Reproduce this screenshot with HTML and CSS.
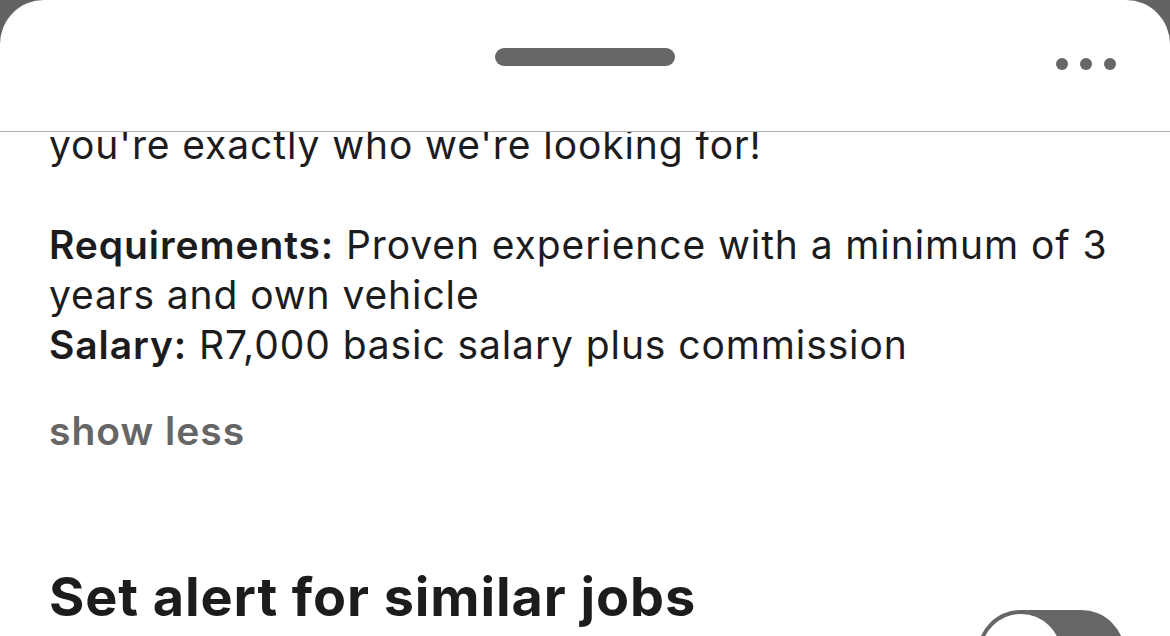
FILE: index.html
```html
<!DOCTYPE html>
<html>
<head>
<meta charset="utf-8">
<link rel="stylesheet" href="styles.css">
</head>
<body>
<div class="sheet">
  <header class="sheet-header">
    <div class="handle"></div>
    <div class="more">
      <span class="dot"></span><span class="dot"></span><span class="dot"></span>
    </div>
  </header>
  <main class="viewport">
    <div class="scroller">
      <p class="desc">you're exactly who we're looking for!</p>
      <p class="desc gap"><b>Requirements:</b> Proven experience with a minimum of 3 years and own vehicle<br><b>Salary:</b> R7,000 basic salary plus commission</p>
      <div class="show-less">show less</div>
      <div class="alert-row">
        <h2 class="alert-title">Set alert for similar jobs</h2>
        <div class="toggle"><span class="knob"></span></div>
      </div>
    </div>
  </main>
</div>
</body>
</html>
```
FILE: styles.css
```css
html, body {
  margin: 0;
  padding: 0;
  height: 100%;
  background: #636363;
  overflow: hidden;
}
.sheet {
  width: 1170px;
  height: 636px;
  background: #ffffff;
  border-radius: 44px 44px 0 0;
  display: flex;
  flex-direction: column;
  overflow: hidden;
  font-family: Inter, "Liberation Sans", sans-serif;
  color: #1c1c1e;
}
.sheet-header {
  height: 131px;
  flex: none;
  border-bottom: 1px solid #b4b4b4;
  display: flex;
  justify-content: center;
  position: relative;
}
.handle {
  margin-top: 48px;
  width: 180px;
  height: 18px;
  border-radius: 9px;
  background: #666666;
}
.more {
  position: absolute;
  right: 54px;
  top: 58px;
  display: flex;
  gap: 12px;
}
.dot {
  width: 12px;
  height: 12px;
  border-radius: 50%;
  background: #666666;
}
.viewport {
  flex: 1;
  overflow: hidden;
}
.scroller {
  margin-top: -12px;
  padding: 0 49px;
}
.desc {
  margin: 0;
  font-size: 39px;
  line-height: 50px;
  letter-spacing: 0.9px;
}
.desc b {
  font-weight: 600;
}
.gap {
  margin-top: 50px;
}
.show-less {
  margin-top: 36px;
  font-size: 39px;
  line-height: 50px;
  font-weight: 600;
  color: #666666;
  letter-spacing: 1px;
}
.alert-row {
  margin-top: 109px;
  display: flex;
  justify-content: space-between;
  align-items: flex-start;
}
.alert-title {
  margin: 0;
  font-size: 54px;
  line-height: 64px;
  font-weight: 700;
  letter-spacing: 0.9px;
}
.toggle {
  margin-top: 45px;
  margin-right: -4px;
  width: 148px;
  height: 88px;
  border-radius: 44px;
  background: #666666;
  display: flex;
  align-items: center;
  padding-left: 4px;
  box-sizing: border-box;
}
.knob {
  width: 80px;
  height: 80px;
  border-radius: 50%;
  background: #ffffff;
}
```
